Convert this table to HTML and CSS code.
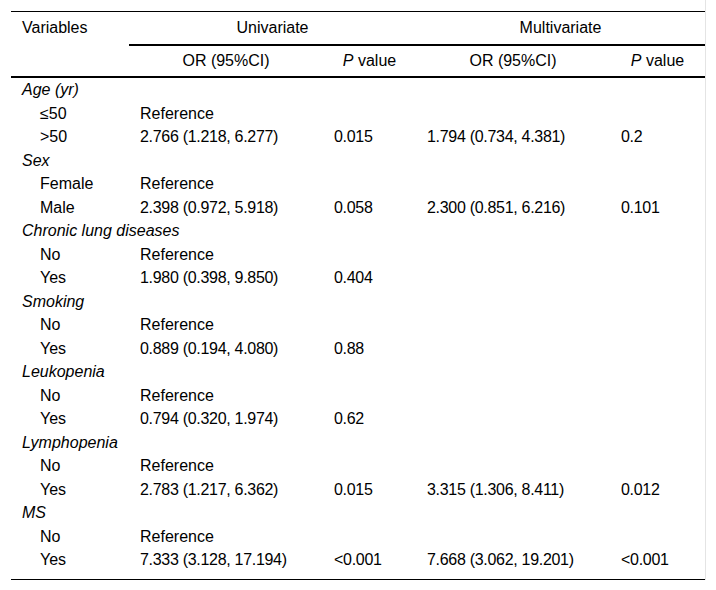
FILE: index.html
```html
<!DOCTYPE html>
<html lang="en">
<head>
<meta charset="utf-8">
<title>Univariate and multivariate analysis</title>
<link rel="stylesheet" href="styles.css">
</head>
<body>
<div class="wrap">
<table class="tbl">
  <colgroup>
    <col class="c1"><col class="c2"><col class="c3"><col class="c4"><col class="c5">
  </colgroup>
  <thead>
    <tr class="h1">
      <th rowspan="2" class="var">Variables</th>
      <th colspan="2" class="grp">Univariate</th>
      <th colspan="2" class="grp">Multivariate</th>
    </tr>
    <tr class="h2">
      <th class="sub">OR (95%CI)</th>
      <th class="sub"><i>P</i> value</th>
      <th class="sub">OR (95%CI)</th>
      <th class="sub"><i>P</i> value</th>
    </tr>
  </thead>
  <tbody>
    <tr><td colspan="5" class="cat">Age (yr)</td></tr>
    <tr><td class="item">≤50</td><td>Reference</td><td></td><td></td><td></td></tr>
    <tr><td class="item">&gt;50</td><td class="num">2.766 (1.218, 6.277)</td><td class="num">0.015</td><td class="num">1.794 (0.734, 4.381)</td><td class="num">0.2</td></tr>
    <tr><td colspan="5" class="cat">Sex</td></tr>
    <tr><td class="item">Female</td><td>Reference</td><td></td><td></td><td></td></tr>
    <tr><td class="item">Male</td><td class="num">2.398 (0.972, 5.918)</td><td class="num">0.058</td><td class="num">2.300 (0.851, 6.216)</td><td class="num">0.101</td></tr>
    <tr><td colspan="5" class="cat">Chronic lung diseases</td></tr>
    <tr><td class="item">No</td><td>Reference</td><td></td><td></td><td></td></tr>
    <tr><td class="item">Yes</td><td class="num">1.980 (0.398, 9.850)</td><td class="num">0.404</td><td></td><td></td></tr>
    <tr><td colspan="5" class="cat">Smoking</td></tr>
    <tr><td class="item">No</td><td>Reference</td><td></td><td></td><td></td></tr>
    <tr><td class="item">Yes</td><td class="num">0.889 (0.194, 4.080)</td><td class="num">0.88</td><td></td><td></td></tr>
    <tr><td colspan="5" class="cat">Leukopenia</td></tr>
    <tr><td class="item">No</td><td>Reference</td><td></td><td></td><td></td></tr>
    <tr><td class="item">Yes</td><td class="num">0.794 (0.320, 1.974)</td><td class="num">0.62</td><td></td><td></td></tr>
    <tr><td colspan="5" class="cat">Lymphopenia</td></tr>
    <tr><td class="item">No</td><td>Reference</td><td></td><td></td><td></td></tr>
    <tr><td class="item">Yes</td><td class="num">2.783 (1.217, 6.362)</td><td class="num">0.015</td><td class="num">3.315 (1.306, 8.411)</td><td class="num">0.012</td></tr>
    <tr><td colspan="5" class="cat">MS</td></tr>
    <tr><td class="item">No</td><td>Reference</td><td></td><td></td><td></td></tr>
    <tr class="last"><td class="item">Yes</td><td class="num">7.333 (3.128, 17.194)</td><td class="num">&lt;0.001</td><td class="num">7.668 (3.062, 19.201)</td><td class="num">&lt;0.001</td></tr>
  </tbody>
</table>
</div>
</body>
</html>
```
FILE: styles.css
```css
html, body {
  margin: 0;
  padding: 0;
  background: #fff;
}
body {
  font-family: "Liberation Sans", Arial, sans-serif;
  font-size: 16px;
  color: #000;
}
.wrap {
  width: 694px;
  padding: 11px 0 0 11px;
  border-right: 1px solid #e4e4e4;
}
.tbl {
  width: 694px;
  table-layout: fixed;
  border-collapse: separate;
  border-spacing: 0;
  line-height: 19.5px;
}
.c1 { width: 118px; }
.c2 { width: 194px; }
.c3 { width: 93px; }
.c4 { width: 194px; }
.c5 { width: 95px; }

.tbl th {
  font-weight: normal;
  padding: 0 10px;
  vertical-align: top;
}
.h1 th {
  border-top: 1px solid #000;
  border-bottom: 2px solid #000;
  padding-top: 6px;
  padding-bottom: 6.5px;
}
.h1 .var {
  text-align: left;
  padding-left: 11px;
}
.h1 .grp {
  text-align: center;
}
.h2 .sub {
  text-align: center;
  border-bottom: 2px solid #000;
  padding-top: 5px;
  padding-bottom: 5.5px;
}
.tbl td {
  padding: 2px 10px 2px 11px;
  vertical-align: top;
  white-space: nowrap;
}
.tbl td.num {
  letter-spacing: -0.3px;
}
.tbl td.cat {
  font-style: italic;
}
.tbl td.item {
  padding-left: 29px;
}
.last td {
  padding-bottom: 9px;
  border-bottom: 1px solid #000;
}
```
